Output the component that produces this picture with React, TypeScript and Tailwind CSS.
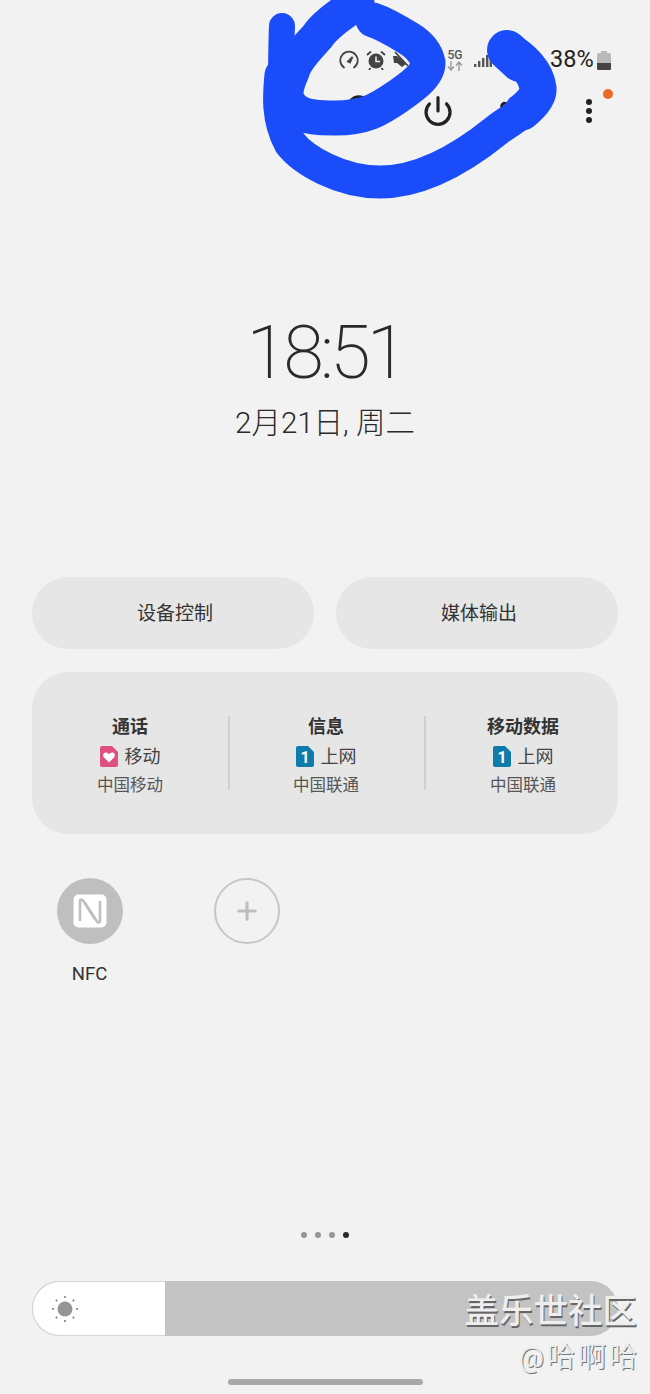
import React from 'react';
import { Power, Search, Settings, Plus } from 'lucide-react';

const cjk = "font-['Roboto','Noto_Sans_CJK_SC',sans-serif]";

const SimIcon: React.FC<{ kind: 'heart' | 'one' }> = ({ kind }) => (
  <svg width="18" height="21" viewBox="0 0 18 21" className="shrink-0">
    <path
      d="M2 0H12L18 6V19a2 2 0 0 1-2 2H2a2 2 0 0 1-2-2V2a2 2 0 0 1 2-2Z"
      fill={kind === 'heart' ? '#e0507f' : '#0f7bab'}
    />
    {kind === 'heart' ? (
      <path d="M9 16.5 3.8 11.2C2.2 9.2 3.6 6.6 5.8 6.6 7.2 6.6 8.4 7.4 9 8.6 9.6 7.4 10.8 6.6 12.2 6.6 14.4 6.6 15.8 9.2 14.2 11.2Z" fill="#fff" />
    ) : (
      <text x="9" y="17" textAnchor="middle" fontSize="16" fontWeight="700" fill="#fff" fontFamily="Roboto">1</text>
    )}
  </svg>
);

const SimColumn: React.FC<{ title: string; kind: 'heart' | 'one'; label: string; carrier: string; width: string }> = ({ title, kind, label, carrier, width }) => (
  <div className={`flex flex-col items-center shrink-0 ${width}`}>
    <div className="text-[18px] leading-[28px] font-bold text-[#333]">{title}</div>
    <div className="flex items-center gap-[7px] h-[32px] text-[18px] text-[#444]">
      <SimIcon kind={kind} />
      <span>{label}</span>
    </div>
    <div className="text-[16.5px] leading-[26px] text-[#555]">{carrier}</div>
  </div>
);

const PillButton: React.FC<{ label: string }> = ({ label }) => (
  <div className="flex-1 h-[72px] rounded-[36px] bg-[#e6e6e6] flex items-center justify-center pl-[4px] pt-[2px] text-[19px] text-[#333]">
    {label}
  </div>
);

const NfcGlyph = () => (
  <svg width="34" height="34" viewBox="0 0 34 34">
    <rect x="0.5" y="0.5" width="33" height="33" rx="5" fill="#fff" />
    <path d="M7 27V7C7 5 9 5 10 6.5L22 25" stroke="#bfbfbf" strokeWidth="2.6" fill="none" />
    <path d="M27 7V27C27 29 25 29 24 27.5L12 9" stroke="#bfbfbf" strokeWidth="2.6" fill="none" />
  </svg>
);

const SunIcon = () => (
  <svg width="28" height="28" viewBox="0 0 28 28">
    <circle cx="14" cy="14" r="7.5" fill="#959595" />
    {[0, 45, 90, 135, 180, 225, 270, 315].map((a) => (
      <circle key={a} cx="14" cy="2" r="1" fill="#777" transform={`rotate(${a} 14 14)`} />
    ))}
  </svg>
);

const StatusIcons = () => (
  <div className="flex items-center h-[26px] pl-[339px]">
    <svg width="20" height="20" viewBox="0 0 20 20" fill="none" stroke="#444" strokeWidth="1.8">
      <path d="M5 17.5A8.7 8.7 0 1 1 15 17.5" strokeLinecap="round" />
      <path d="M9 11.5 13.5 7 11 12.5Z" fill="#444" />
    </svg>
    <svg width="20" height="20" viewBox="0 0 20 20" className="ml-[7px]">
      <circle cx="10" cy="11" r="7.5" fill="#444" />
      <path d="M10 6.5V11.5H14" stroke="#f2f2f2" strokeWidth="1.5" fill="none" />
      <path d="M1 5 5 1.5M19 5 15 1.5M4.5 18 3 20M15.5 18 17 20" stroke="#444" strokeWidth="1.8" />
    </svg>
    <svg width="18" height="18" viewBox="0 0 18 18" className="ml-[6px]">
      <path d="M1 5H5L9 8 14 13 10 16 5 12H2Z" fill="#444" />
      <path d="M3 1 16 15" stroke="#444" strokeWidth="1.8" />
    </svg>
    <div className="ml-[37px] w-[16px] flex flex-col items-center font-['Roboto',sans-serif] text-[#555]">
      <span className="text-[12px] leading-[11px] font-medium">5G</span>
      <svg width="16" height="10" viewBox="0 0 16 10" fill="none" stroke="#999" strokeWidth="1.4">
        <path d="M4 0V8M1 5.5 4 9 7 5.5M12 10V2M9 4.5 12 1 15 4.5" />
      </svg>
    </div>
    <svg width="18" height="14" viewBox="0 0 18 14" className="ml-[11px]" fill="#555">
      <rect x="0" y="11" width="2.4" height="3" />
      <rect x="4" y="8" width="2.4" height="6" />
      <rect x="8" y="5" width="2.4" height="9" />
      <rect x="12" y="2" width="2.4" height="12" />
      <rect x="15.6" y="0" width="2.4" height="14" />
    </svg>
    <span className="ml-[58px] text-[23.5px] leading-none text-[#222] font-['Roboto',sans-serif]">38%</span>
    <svg width="14" height="19" viewBox="0 0 14 19" className="ml-[3px]">
      <path d="M4 0H10V2H12.5A1.5 1.5 0 0 1 14 3.5V17.5A1.5 1.5 0 0 1 12.5 19H1.5A1.5 1.5 0 0 1 0 17.5V3.5A1.5 1.5 0 0 1 1.5 2H4Z" fill="#b9b9b9" />
      <path d="M0 12H14V17.5A1.5 1.5 0 0 1 12.5 19H1.5A1.5 1.5 0 0 1 0 17.5Z" fill="#444" />
    </svg>
  </div>
);

const Toolbar = () => (
  <div className="relative flex items-center h-[34px] mt-[21px] pl-[345px] text-[#222]">
    <Search size={30} strokeWidth={2.4} className="-mt-[6px]" />
    <Power size={32} strokeWidth={2.4} className="ml-[47px]" />
    <Settings size={30} strokeWidth={2.4} className="ml-[44px]" />
    <div className="ml-[58px] flex flex-col gap-[3px]">
      <div className="w-[6px] h-[6px] rounded-full bg-[#222]" />
      <div className="w-[6px] h-[6px] rounded-full bg-[#222]" />
      <div className="w-[6px] h-[6px] rounded-full bg-[#222]" />
    </div>
    <div className="absolute left-[603px] top-[-5px] w-[10px] h-[10px] rounded-full bg-[#ec6a24]" />
  </div>
);

const App: React.FC = () => {
  return (
    <div className={`relative w-[650px] h-[1394px] overflow-hidden bg-[#f2f2f2] flex flex-col ${cjk}`}>
      <div className="pt-[47px]">
        <StatusIcons />
        <Toolbar />
      </div>

      {/* clock */}
      <div className="mt-[181px] flex flex-col items-center text-[#2a2a2a]">
        <div className="text-[74px] leading-[87px] font-extralight tracking-[-4px] font-['Roboto',sans-serif]">18:51</div>
        <div className="mt-[7px] text-[29.5px] leading-[40px] font-light">2月21日, 周二</div>
      </div>

      <div className="mt-[134px] px-[32px] flex gap-[22px]">
        <PillButton label="设备控制" />
        <PillButton label="媒体输出" />
      </div>

      {/* SIM manager */}
      <div className="mx-[32px] mt-[23px] h-[162px] pt-[5px] rounded-[36px] bg-[#e6e6e6] flex items-center">
        <SimColumn title="通话" kind="heart" label="移动" carrier="中国移动" width="w-[196px]" />
        <div className="w-[2px] h-[74px] bg-[#d0d0d0] shrink-0 -mt-[5px]" />
        <SimColumn title="信息" kind="one" label="上网" carrier="中国联通" width="w-[192px] mr-[2px]" />
        <div className="w-[2px] h-[74px] bg-[#d0d0d0] shrink-0 -mt-[5px]" />
        <SimColumn title="移动数据" kind="one" label="上网" carrier="中国联通" width="w-[194px]" />
      </div>

      {/* quick tiles */}
      <div className="mt-[44px] pl-[11px] flex">
        <div className="w-[157px] flex flex-col items-center">
          <div className="w-[66px] h-[66px] rounded-full bg-[#bfbfbf] flex items-center justify-center">
            <NfcGlyph />
          </div>
          <div className="mt-[17px] text-[18.5px] leading-[26px] text-[#333] font-['Roboto',sans-serif]">NFC</div>
        </div>
        <div className="w-[157px] flex flex-col items-center">
          <div className="w-[66px] h-[66px] rounded-full border-2 border-[#c6c6c6] flex items-center justify-center text-[#bdbdbd]">
            <Plus size={28} strokeWidth={2.6} />
          </div>
        </div>
      </div>

      <div className="mt-auto flex flex-col items-center">
        <div className="flex gap-[8px]">
          <div className="w-[6px] h-[6px] rounded-full bg-[#969696]" />
          <div className="w-[6px] h-[6px] rounded-full bg-[#969696]" />
          <div className="w-[6px] h-[6px] rounded-full bg-[#969696]" />
          <div className="w-[6px] h-[6px] rounded-full bg-[#2a2a2a]" />
        </div>
        <div className="mt-[43px] w-[586px] h-[55px] rounded-[28px] overflow-hidden bg-[#c3c3c3] flex">
          <div className="w-[133px] bg-white border border-r-0 border-[#d5d5d5] rounded-l-[28px] flex items-center pl-[18px]">
            <SunIcon />
          </div>
        </div>
        <div className="mt-[43px] mb-[9px] w-[195px] h-[6px] rounded-full bg-[#a8a8a8]" />
      </div>

      {/* watermark */}
      <div className="absolute right-[13px] top-[1289px] text-[34.5px] leading-[44px] font-medium text-[#eeeeee] [text-shadow:1px_2px_0_#666]">盖乐世社区</div>
      <div className="absolute right-[10px] top-[1340px] text-[28px] leading-[36px] tracking-[3px] text-[#ececec] [text-shadow:1px_1px_0_#777]">@哈啊哈</div>

      {/* blue pen scribble */}
      <svg width="650" height="210" viewBox="0 0 650 210" className="absolute left-0 top-0" fill="none" stroke="#1a4cfa" strokeLinecap="round" strokeLinejoin="round">
        <path d="M282 26C281 50 281 70 281 90" strokeWidth="26" />
        <path d="M281 75C279 95 277 118 290 143C303 160 340 182 380 182C420 182 460 160 497 130C507 122 516 118 525 110" strokeWidth="33" />
        <path d="M522 112C532 104 539 96 538 88C536 72 522 58 507 50" strokeWidth="37" />
        <path d="M507 50 520 62" strokeWidth="40" />
        <path d="M357 3C340 15 325 25 317 37C305 50 295 60 292 72C285 88 282 100 295 110C305 118 320 118 335 118C365 118 378 110 397 97C410 88 428 76 428 63C426 52 418 44 408 38C395 30 385 24 373 20" strokeWidth="35" />
      </svg>
    </div>
  );
};

export default App;
